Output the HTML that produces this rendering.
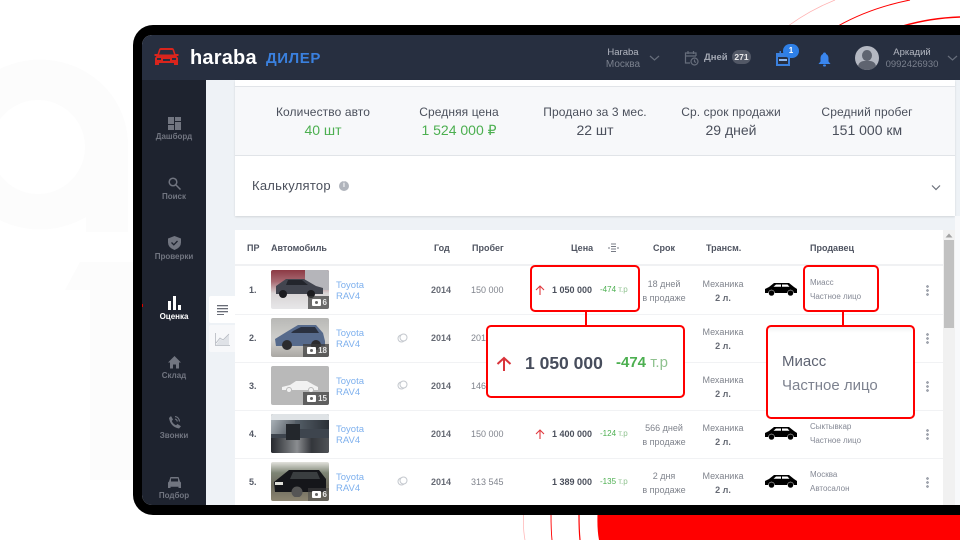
<!DOCTYPE html>
<html lang="ru"><head><meta charset="utf-8"><title>Haraba</title>
<style>
*{box-sizing:border-box}
html,body{margin:0;padding:0;width:960px;height:540px;overflow:hidden;background:#fff}
body{position:relative;font-family:"Liberation Sans","Noto Sans CJK SC",sans-serif;color:#4a4f5c}
#w{position:absolute;left:0;top:0;width:960px;height:540px;overflow:hidden;filter:blur(.3px)}
.a{position:absolute;white-space:nowrap}
.c{position:absolute;white-space:nowrap;text-align:center;transform:translateX(-50%)}
.nav{position:absolute;left:142px;width:64px;text-align:center;font-size:8px;line-height:10px;font-weight:bold;color:#717580}
.nav svg{display:block;margin:0 auto 2px}
.stl{font-size:12px;color:#4b505c;letter-spacing:.1px}
.stv{font-size:14px;color:#4b505c}
.th{font-size:9px;font-weight:bold;color:#4f5461}
.rowline{position:absolute;left:235px;width:708px;height:1px;background:#f1f2f4}
.n{font-size:9px;font-weight:bold;color:#555a66}
.link{font-size:9.5px;line-height:11px;color:#7fb1ee}
.yr{font-size:9px;font-weight:bold;color:#666a74}
.km{font-size:9px;color:#80848d}
.pr{font-size:9px;font-weight:bold;color:#4b505c}
.df{font-size:8px;color:#8fc28f}.df b{color:#4caf50;font-weight:normal}
.sr{font-size:9px;line-height:14px;color:#80848d;text-align:center}
.tr{font-size:9px;line-height:14px;color:#80848d;text-align:center}.tr b{color:#666a74}
.sl{font-size:8px;line-height:14px;color:#858995}
.ph{position:absolute;left:271px;width:58px;height:39px;border-radius:2px;overflow:hidden}
.bd{position:absolute;right:0;bottom:0;height:13px;background:rgba(60,60,60,.72);color:#e8e8e8;font-size:8px;font-weight:bold;line-height:13px;padding:0 2px 0 15px}
.bd:before{content:"";position:absolute;left:4px;top:3px;width:9px;height:7px;background:#fff;border-radius:1px}
.bd:after{content:"";position:absolute;left:7px;top:5px;width:3px;height:3px;border-radius:50%;background:#666}
.dots{position:absolute;left:926px;width:3px;height:11px;background:radial-gradient(circle at 1.5px 1.5px,#a3a7b0 1.3px,transparent 1.5px) 0 0/3px 4px repeat-y}
.box{position:absolute;border:2px solid #f00;border-radius:5px}
.cn{position:absolute;width:2px;background:#f00}
</style></head><body><div id="w">

<!-- background decoration -->
<svg class="a" style="left:0;top:0" width="960" height="540">
<path d="M128 232V145A88 85 0 1 0 86 217V232Z" fill="#fcfcfc"/>
<circle cx="38" cy="147" r="47" fill="#fff"/>
<path d="M80 262H135V480H90V290H65Z" fill="#fcfcfc"/>
<path d="M788 26Q810 10 835 0" stroke="#ffb0b0" stroke-width=".7" fill="none"/>
<path d="M838 26Q870 8 910 0" stroke="#f00" stroke-width="1" fill="none"/>
<path d="M903 26Q930 18 960 17" stroke="#f00" stroke-width="1.6" fill="none"/>
<path d="M523.500 514Q523 530 525 540" stroke="#ffb0b0" stroke-width=".7" fill="none"/>
<path d="M551 514Q551 530 552 540" stroke="#f00" stroke-width=".9" fill="none"/>
<path d="M579 514Q579 530 580 540" stroke="#f00" stroke-width="1.2" fill="none"/>
<path d="M597.500 514Q597 530 599 540H960V514Z" fill="#f00"/>
</svg>

<!-- device frame -->
<div class="a" style="left:133px;top:25px;width:860px;height:490px;background:#000;border-radius:20px"></div>
<div class="a" style="left:142px;top:35px;width:818px;height:470px;background:#eef2f6;border-radius:10px 0 0 10px;overflow:hidden">
 <div class="a" style="left:0;top:0;width:818px;height:45px;background:#272f40"></div>
 <div class="a" style="left:0;top:45px;width:64px;height:425px;background:#1e232f"></div>
</div>

<!-- logo -->
<svg class="a" style="left:153px;top:47px" width="27" height="21" viewBox="0 0 27 21"><path d="M6 2.500Q6.500 1 8 1H19Q20.500 1 21 2.500L22.500 7H25.500V9H23.500L25 11V18H21V16H6V18H2V11L3.500 9H1.500V7H4.500Z" fill="#d9251d"/><path d="M7.500 3H19.500L21 7.500H6Z" fill="#272f40"/><rect x="4" y="11" width="4" height="2" fill="#272f40"/><rect x="19" y="11" width="4" height="2" fill="#272f40"/><rect x="10" y="12" width="7" height="2" fill="#272f40"/></svg>
<div class="a" style="left:190px;top:46px;font-size:20px;font-weight:bold;color:#fff;line-height:24px;letter-spacing:.2px">haraba</div>
<div class="a" style="left:266px;top:50px;font-size:15px;font-weight:bold;color:#3a80de;line-height:18px;letter-spacing:.6px">ДИЛЕР</div>

<!-- header right -->
<div class="c" style="left:623px;top:47px;font-size:9.500px;line-height:12px;color:#b4b8c2;text-align:center">Haraba<br><span style="color:#7a808d;font-size:10px">Москва</span></div>
<svg class="a" style="left:649px;top:54px" width="11" height="8"><path d="M1 2l4.500 4L10 2" stroke="#666d7b" stroke-width="1.200" fill="none"/></svg>
<svg class="a" style="left:684px;top:50px" width="15" height="16" viewBox="0 0 15 16" fill="none" stroke="#666d7b" stroke-width="1.200"><path d="M6 13H1.500V3H12V6"/><path d="M1.500 6H12M4 1v3M9.500 1v3"/><circle cx="10.500" cy="11.500" r="3.500"/><path d="M10.500 9.500v2.200l1.500 .8"/></svg>
<div class="a" style="left:704px;top:52px;font-size:9.500px;font-weight:bold;color:#a3a8b3;line-height:12px">Дней</div>
<div class="a" style="left:732px;top:50px;width:19px;height:14px;border-radius:7px;background:#525866;color:#e8e8ea;font-size:8.500px;font-weight:bold;text-align:center;line-height:14px">271</div>
<svg class="a" style="left:776px;top:51px" width="14" height="15" viewBox="0 0 14 15"><path d="M1 3H13V14H1Z" fill="#272f40" stroke="#3a80de" stroke-width="2"/><rect x="1" y="3" width="12" height="3" fill="#3a80de"/><rect x="3.500" y="0" width="1.500" height="3" fill="#3a80de"/><rect x="9" y="0" width="1.500" height="3" fill="#3a80de"/><rect x="3" y="8" width="8" height="2" fill="#8fb8ee"/></svg>
<div class="a" style="left:783px;top:44px;width:16px;height:14px;border-radius:8px;background:#2e7fe6;color:#fff;font-size:8px;font-weight:bold;text-align:center;line-height:14px">1</div>
<svg class="a" style="left:818px;top:52px" width="13" height="15" viewBox="0 0 13 15"><path d="M6.500 0.500Q8 0.500 8 2Q10.500 3 10.500 6.500V9.500L12.500 12H.5L2.500 9.500V6.500Q2.500 3 5 2Q5 .5 6.500 .5Z" fill="#3a86ee"/><rect x="5" y="12.500" width="3" height="2" rx="1" fill="#3a86ee"/></svg>
<div class="a" style="left:855px;top:46px;width:24px;height:24px;border-radius:50%;background:#b4b8c2;overflow:hidden"><div class="a" style="left:7px;top:4px;width:10px;height:11px;border-radius:50%;background:#5f6470"></div><div class="a" style="left:3px;top:15px;width:18px;height:12px;border-radius:6px 6px 0 0;background:#5f6470"></div></div>
<div class="c" style="left:912px;top:47px;font-size:9.500px;line-height:12px;color:#b4b8c2;text-align:center">Аркадий<br><span style="color:#7a808d">0992426930</span></div>
<svg class="a" style="left:947px;top:54px" width="11" height="8"><path d="M1 2l4.500 4L10 2" stroke="#666d7b" stroke-width="1.200" fill="none"/></svg>

<!-- sidebar -->
<div class="nav" style="top:117px"><svg width="13" height="13" viewBox="0 0 13 13" fill="#717580"><rect width="6" height="7"/><rect x="7" width="6" height="4"/><rect y="8" width="6" height="5"/><rect x="7" y="5" width="6" height="8"/></svg>Дашборд</div>
<div class="nav" style="top:177px"><svg width="13" height="13" viewBox="0 0 13 13" fill="none" stroke="#717580" stroke-width="1.500"><circle cx="5" cy="5" r="3.800"/><path d="M8 8l4.500 4.500"/></svg>Поиск</div>
<div class="nav" style="top:236px"><svg width="13" height="14" viewBox="0 0 13 14"><path d="M6.500 0L13 2.500V6.500Q13 11.500 6.500 14Q0 11.500 0 6.500V2.500Z" fill="#717580"/><path d="M3.500 6.500l2.300 2.300 3.700-3.800" stroke="#1e232f" stroke-width="1.300" fill="none"/></svg>Проверки</div>
<div class="nav" style="top:296px;color:#fff"><svg width="13" height="14" viewBox="0 0 13 14" fill="#fff"><rect x="0" y="5" width="3" height="9"/><rect x="5" y="0" width="3" height="14"/><rect x="10" y="9" width="3" height="5"/></svg>Оценка</div>
<div class="nav" style="top:356px"><svg width="13" height="13" viewBox="0 0 13 13" fill="#717580"><path d="M6.500 0L13 6.500H11V12.500H8V8.500H5V12.500H2V6.500H0Z"/></svg>Склад</div>
<div class="nav" style="top:415px"><svg width="13" height="14" viewBox="0 0 13 14"><path d="M3 1L5 4.500 3.800 6Q5 9 8 10.300L9.500 9 13 11.300 11 13.500Q2.500 12 1 3Z" fill="#717580"/><path d="M7 1.500Q11 2 11.500 6.500M7 4Q9 4.500 9.300 6.500" stroke="#717580" stroke-width="1.100" fill="none"/></svg>Звонки</div>
<div class="nav" style="top:476px"><svg width="13" height="13" viewBox="0 0 13 13"><path d="M2.500 1H10.500L12 5.500 13 6.500V12H10.500V10.800H2.500V12H0V6.500L1 5.500Z" fill="#717580"/><rect x="3" y="2.500" width="7" height="3" fill="#1e232f"/></svg>Подбор</div>
<div class="a" style="left:142px;top:304px;width:1px;height:3px;background:#d00"></div>

<!-- side tabs -->
<div class="a" style="left:209px;top:296px;width:26px;height:27px;background:#fff;border-radius:2px 0 0 2px"></div>
<div class="a" style="left:209px;top:325px;width:26px;height:27px;background:#f7f8fa;border-radius:2px 0 0 2px"></div>
<svg class="a" style="left:217px;top:305px" width="11" height="10" fill="#686c76"><rect width="11" height="1.300"/><rect y="3" width="11" height="1.300"/><rect y="6" width="11" height="1.300"/><rect y="9" width="7" height="1.300"/></svg>
<svg class="a" style="left:215px;top:333px" width="15" height="13" viewBox="0 0 15 13"><path d="M1 12L5 6 8 8 14 1V12Z" fill="#dfe2e7"/><path d="M.5 0V12.500H15M1 10L5 5 8 7 14 1" stroke="#b4b8c0" stroke-width=".8" fill="none"/></svg>

<!-- stats panel -->
<div class="a" style="left:235px;top:80px;width:720px;height:136px;background:#fff;box-shadow:0 1px 2px rgba(0,0,0,.12)"></div>
<div class="a" style="left:235px;top:86px;width:720px;height:70px;background:#f7f8fa;border-top:1px solid #e1e4e8;border-bottom:1px solid #e1e4e8"></div>
<div class="c stl" style="left:323px;top:105px">Количество авто</div><div class="c stv" style="left:323px;top:122px;color:#4caf50">40 шт</div>
<div class="c stl" style="left:459px;top:105px">Средняя цена</div><div class="c stv" style="left:459px;top:122px;color:#4caf50">1 524 000 ₽</div>
<div class="c stl" style="left:595px;top:105px">Продано за 3 мес.</div><div class="c stv" style="left:595px;top:122px">22 шт</div>
<div class="c stl" style="left:731px;top:105px">Ср. срок продажи</div><div class="c stv" style="left:731px;top:122px">29 дней</div>
<div class="c stl" style="left:867px;top:105px">Средний пробег</div><div class="c stv" style="left:867px;top:122px">151 000 км</div>
<div class="a" style="left:252px;top:178px;font-size:13px;color:#4b505c;line-height:16px;letter-spacing:.25px">Калькулятор</div>
<div class="a" style="left:339px;top:181px;width:10px;height:10px;border-radius:50%;background:#b0b4bc;color:#fff;font-size:7px;font-weight:bold;text-align:center;line-height:10px">i</div>
<svg class="a" style="left:931px;top:184px" width="10" height="7"><path d="M1 1.500l4 4 4-4" stroke="#6a6f7a" stroke-width="1.200" fill="none"/></svg>

<!-- table -->
<div class="a" style="left:235px;top:230px;width:708px;height:275px;background:#fff"></div>
<div class="a" style="left:235px;top:264px;width:708px;height:2px;background:#f0f1f3"></div>
<div class="th a" style="left:247px;top:243px">ПР</div>
<div class="th a" style="left:271px;top:243px">Автомобиль</div>
<div class="th a" style="left:434px;top:243px">Год</div>
<div class="th a" style="left:472px;top:243px">Пробег</div>
<div class="th a" style="left:571px;top:243px">Цена</div>
<svg class="a" style="left:608px;top:243px" width="11" height="10" stroke="#777b85" fill="none" stroke-width="1"><path d="M3 1H8M3 3.500H8M3 6H8M3 8.500H8M0 5H2M9 5H11"/></svg>
<div class="th a" style="left:653px;top:243px">Срок</div>
<div class="th a" style="left:706px;top:243px">Трансм.</div>
<div class="th a" style="left:810px;top:243px">Продавец</div>

<div class="rowline" style="top:314px"></div>
<div class="rowline" style="top:362px"></div>
<div class="rowline" style="top:410px"></div>
<div class="rowline" style="top:458px"></div>

<!-- photos -->
<div class="ph" style="top:270px;background:linear-gradient(180deg,#8c3a44 0,#a86a72 30%,#d9d5d6 60%,#e7e7e9 100%)"><div class="a" style="left:34px;top:0;width:24px;height:20px;background:#b5b5ba"></div><svg class="a" style="left:3px;top:6px" width="50" height="22" viewBox="0 0 50 22"><path d="M2 10L12 3H30L42 10 49 12V18H2Z" fill="#42454f"/><path d="M14 4H28L34 9H12Z" fill="#23252c"/><circle cx="9" cy="18" r="4" fill="#1c1c20"/><circle cx="37" cy="18" r="4" fill="#1c1c20"/></svg><div class="bd">6</div></div>
<div class="ph" style="top:318px;background:linear-gradient(180deg,#b9b9b6 0,#cfcfcd 55%,#cbc9c5 65%,#a9a7a3 100%)"><svg class="a" style="left:3px;top:5px" width="52" height="27" viewBox="0 0 52 27"><path d="M1 16L14 8 24 2H42L49 10 51 18V23H2Z" fill="#566a8c"/><path d="M19 8L27 4H41L45 10H17Z" fill="#2a3140"/><circle cx="13" cy="22" r="5" fill="#2b2b2e"/><circle cx="42" cy="22" r="5" fill="#2b2b2e"/></svg><div class="bd">18</div></div>
<div class="ph" style="top:366px;background:#b9b9b9"><svg class="a" style="left:10px;top:14px" width="38" height="13" viewBox="0 0 38 13"><path d="M1 7L9 5 15 1H26L33 5 37 7V10H1Z" fill="#f2f2f2"/><circle cx="8" cy="10" r="2.500" fill="#f2f2f2" stroke="#b9b9b9"/><circle cx="30" cy="10" r="2.500" fill="#f2f2f2" stroke="#b9b9b9"/></svg><div class="bd">15</div></div>
<div class="ph" style="top:414px;background:#3e454e"><div class="a" style="left:0;top:0;width:58px;height:6px;background:#dfe3e6"></div><div class="a" style="left:0;top:6px;width:24px;height:14px;background:linear-gradient(120deg,#aab2b8,#4a5159)"></div><div class="a" style="left:24px;top:6px;width:34px;height:9px;background:linear-gradient(90deg,#566069,#2b3037)"></div><div class="a" style="left:0;top:24px;width:58px;height:15px;background:linear-gradient(90deg,#26292e,#8a8d90 45%,#33363b 70%,#505357)"></div><div class="a" style="left:15px;top:10px;width:14px;height:16px;background:#23272c"></div></div>
<div class="ph" style="top:462px;background:linear-gradient(180deg,#e2e2dc 0,#7d8474 28%,#6c6a5d 60%,#8d8672 100%)"><svg class="a" style="left:2px;top:5px" width="54" height="30" viewBox="0 0 54 30"><path d="M1 15L16 3H46L53 12V25H2Z" fill="#15161a"/><path d="M20 5H44L47 12H17Z" fill="#3a3e40"/><rect x="2" y="15" width="8" height="3" fill="#dfdfd8"/><circle cx="24" cy="25" r="5.500" fill="#555"/></svg><div class="bd" style="background:rgba(70,70,70,.55)">6</div></div>

<!-- rows static -->
<div class="n a" style="left:249px;top:285px">1.</div><div class="n a" style="left:249px;top:333px">2.</div><div class="n a" style="left:249px;top:381px">3.</div><div class="n a" style="left:249px;top:429px">4.</div><div class="n a" style="left:249px;top:477px">5.</div>
<div class="link a" style="left:336px;top:280px">Toyota<br>RAV4</div><div class="link a" style="left:336px;top:328px">Toyota<br>RAV4</div><div class="link a" style="left:336px;top:376px">Toyota<br>RAV4</div><div class="link a" style="left:336px;top:424px">Toyota<br>RAV4</div><div class="link a" style="left:336px;top:472px">Toyota<br>RAV4</div>
<svg class="a" style="left:397px;top:333px" width="11" height="10" fill="none" stroke="#c4c8ce"><circle cx="4.500" cy="5.500" r="3.500"/><circle cx="6.500" cy="4.500" r="3.500" fill="#fff"/></svg>
<svg class="a" style="left:397px;top:380px" width="11" height="10" fill="none" stroke="#c4c8ce"><circle cx="4.500" cy="5.500" r="3.500"/><circle cx="6.500" cy="4.500" r="3.500" fill="#fff"/></svg>
<svg class="a" style="left:397px;top:476px" width="11" height="10" fill="none" stroke="#c4c8ce"><circle cx="4.500" cy="5.500" r="3.500"/><circle cx="6.500" cy="4.500" r="3.500" fill="#fff"/></svg>
<div class="yr a" style="left:431px;top:285px">2014</div><div class="yr a" style="left:431px;top:333px">2014</div><div class="yr a" style="left:431px;top:381px">2014</div><div class="yr a" style="left:431px;top:429px">2014</div><div class="yr a" style="left:431px;top:477px">2014</div>
<div class="km a" style="left:471px;top:285px">150 000</div><div class="km a" style="left:471px;top:333px">201</div><div class="km a" style="left:471px;top:381px">146</div><div class="km a" style="left:471px;top:429px">150 000</div><div class="km a" style="left:471px;top:477px">313 545</div>

<svg class="a" style="left:535px;top:285px" width="10" height="10" stroke="#e0393e" stroke-width="1.100" fill="none"><path d="M5 10V1M1 5l4-4 4 4"/></svg>
<div class="pr a" style="left:552px;top:285px">1 050 000</div><div class="df a" style="left:600px;top:285px"><b>-474</b> т.р</div>
<svg class="a" style="left:535px;top:429px" width="10" height="10" stroke="#e0393e" stroke-width="1.100" fill="none"><path d="M5 10V1M1 5l4-4 4 4"/></svg>
<div class="pr a" style="left:552px;top:429px">1 400 000</div><div class="df a" style="left:600px;top:429px"><b>-124</b> т.р</div>
<div class="pr a" style="left:552px;top:477px">1 389 000</div><div class="df a" style="left:600px;top:477px"><b>-135</b> т.р</div>

<div class="sr c" style="left:664px;top:277px">18 дней<br>в продаже</div>
<div class="sr c" style="left:664px;top:421px">566 дней<br>в продаже</div>
<div class="sr c" style="left:664px;top:469px">2 дня<br>в продаже</div>

<div class="tr c" style="left:723px;top:277px">Механика<br><b>2 л.</b></div>
<div class="tr c" style="left:723px;top:325px">Механика<br><b>2 л.</b></div>
<div class="tr c" style="left:723px;top:373px">Механика<br><b>2 л.</b></div>
<div class="tr c" style="left:723px;top:421px">Механика<br><b>2 л.</b></div>
<div class="tr c" style="left:723px;top:469px">Механика<br><b>2 л.</b></div>

<svg width="0" height="0" style="position:absolute"><defs><g id="suv"><path d="M0 7L4 5 9 1H24L29 5 32 7V11H0Z" fill="#000"/><path d="M11 2.500H16V4.800H8.500ZM17 2.500H22.500L24.500 4.800H17Z" fill="#fff"/><circle cx="6.500" cy="11" r="3" fill="#000" stroke="#fff" stroke-width=".5"/><circle cx="25.500" cy="11" r="3" fill="#000" stroke="#fff" stroke-width=".5"/></g></defs></svg>
<svg class="a" style="left:765px;top:282px" width="32" height="15"><use href="#suv"/></svg>
<svg class="a" style="left:765px;top:426px" width="32" height="15"><use href="#suv"/></svg>
<svg class="a" style="left:765px;top:474px" width="32" height="15"><use href="#suv"/></svg>

<div class="sl a" style="left:810px;top:276px">Миасс<br>Частное лицо</div>
<div class="sl a" style="left:810px;top:420px">Сыктывкар<br>Частное лицо</div>
<div class="sl a" style="left:810px;top:468px">Москва<br>Автосалон</div>

<div class="dots" style="top:285px"></div><div class="dots" style="top:333px"></div><div class="dots" style="top:381px"></div><div class="dots" style="top:429px"></div><div class="dots" style="top:477px"></div>

<!-- scrollbar -->
<div class="a" style="left:955px;top:216px;width:5px;height:289px;background:#f8f9fb"></div>
<div class="a" style="left:943px;top:230px;width:12px;height:275px;background:#f1f1f1"></div>
<svg class="a" style="left:945px;top:233px" width="8" height="5"><path d="M4 .5L7.500 4.500H.5Z" fill="#a3a3a3"/></svg>
<div class="a" style="left:944px;top:240px;width:10px;height:88px;background:#c1c1c1"></div>

<!-- callouts -->
<div class="box" style="left:530px;top:265px;width:110px;height:47px"></div>
<div class="cn" style="left:585px;top:311px;height:16px"></div>
<div class="box" style="left:486px;top:325px;width:199px;height:73px;background:#fff"></div>
<svg class="a" style="left:496px;top:356px" width="16" height="16" stroke="#d9333a" stroke-width="2" fill="none"><path d="M8 15V2M1.500 8L8 2l6.500 6"/></svg>
<div class="a" style="left:525px;top:352px;font-size:17.500px;font-weight:bold;color:#474d5c;line-height:22px">1 050 000</div>
<div class="a" style="left:616px;top:354px;font-size:15px;color:#8fc28f;line-height:18px"><b style="color:#4caf50">-474</b> т.р</div>

<div class="box" style="left:803px;top:265px;width:76px;height:47px"></div>
<div class="cn" style="left:842px;top:311px;height:16px"></div>
<div class="box" style="left:766px;top:325px;width:149px;height:94px;background:linear-gradient(180deg,#f1f2f4 0,#fff 6px)"></div>
<div class="a" style="left:782px;top:353px;font-size:15px;color:#5e6372;line-height:18px">Миасс</div>
<div class="a" style="left:782px;top:377px;font-size:15px;color:#7d828f;line-height:18px">Частное лицо</div>

</div></body></html>
